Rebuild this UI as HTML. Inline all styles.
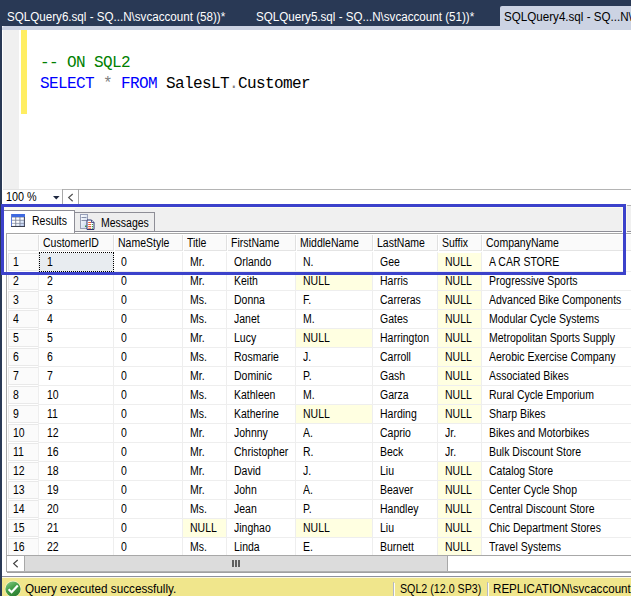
<!DOCTYPE html><html><head><meta charset="utf-8"><title>SQL Query</title><style>
*{margin:0;padding:0;box-sizing:border-box}
html,body{width:631px;height:596px;overflow:hidden;background:#fff}
body{position:relative;font-family:"Liberation Sans",sans-serif;font-size:12px;color:#000}
.a{position:absolute}
.t{position:absolute;white-space:nowrap;transform-origin:0 50%}
#tabbar{left:0;top:0;width:631px;height:26px;background:#293955}
#band{left:2px;top:26px;width:629px;height:4px;background:#ccd3e3;border-top-left-radius:3px}
#lstrip{left:0;top:0;width:2px;height:577px;background:#293955}
.tab{color:#fff;font-size:12px;top:10px;transform:scaleX(.968)}
#atab{left:500px;top:6px;width:131px;height:21px;background:#ccd3e3;border-top-left-radius:2px}
#margin{left:3px;top:30px;width:16px;height:159px;background:#f0f0f0}
#yellow{left:21px;top:30px;width:6px;height:84px;background:#ffee62}
.code{font-family:"Liberation Mono",monospace;font-size:16px;letter-spacing:-0.6px;left:40px;line-height:20px;white-space:pre}
.g{color:#008000}.b{color:#0000ff}.gr{color:#808080}
#zoomline{left:3px;top:189px;width:628px;height:1px;background:#e3e3e3}
#zoomline2{left:62px;top:189px;width:569px;height:1px;background:#b4b4b4}
.cell{position:absolute;height:18px}
.null{background:#ffffe1}
.gt{position:absolute;white-space:nowrap;font-size:12px;line-height:14px;transform-origin:0 50%;transform:scaleX(.874)}
.hl{position:absolute;height:1px;background:#eeeeee}
.vl{position:absolute;width:1px;background:#eeeeee}
.rh{position:absolute;left:8px;width:31px;height:18px;background:#fbfbfb;border:1px solid #e9e9e9}
.hh{position:absolute;top:235px;height:16px;background:#fafafa;border-right:1px solid #e0e0e0;border-bottom:1px solid #e4e4e4}
</style></head><body>
<div class="a" id="tabbar"></div>
<div class="a" id="band"></div>
<div class="a" id="atab"></div>
<div class="t tab" style="left:7px">SQLQuery6.sql - SQ...N\svcaccount (58))*</div>
<div class="t tab" style="left:256px">SQLQuery5.sql - SQ...N\svcaccount (51))*</div>
<div class="t tab" style="left:504px;color:#000">SQLQuery4.sql - SQ...N\s</div>
<div class="a" id="margin"></div><div class="a" id="yellow"></div>
<div class="a code" style="top:53px"><span class="g">-- ON SQL2</span></div>
<div class="a code" style="top:74px"><span class="b">SELECT</span> <span class="gr">*</span> <span class="b">FROM</span> SalesLT<span class="gr">.</span>Customer</div>
<div class="a" id="zoomline"></div><div class="a" id="zoomline2"></div>
<div class="t" style="left:6px;top:190px;font-size:12px;line-height:14px;transform:scaleX(.9)">100 %</div>
<svg class="a" style="left:53px;top:196px" width="8" height="5"><path d="M0 0h6.600L3.300 3.400z" fill="#1e2840"/></svg>
<div class="a" style="left:62px;top:189px;width:1px;height:15px;background:#a8a8a8"></div>
<div class="a" style="left:78px;top:189px;width:1px;height:15px;background:#a8a8a8"></div>
<svg class="a" style="left:67px;top:193px" width="8" height="10"><path d="M5.700 1L1.700 4.600L5.700 8.200" fill="none" stroke="#505050" stroke-width="1.200"/></svg>
<div class="a" style="left:2px;top:205px;width:629px;height:1px;background:#b4b4b4"></div>
<div class="a" style="left:2px;top:206px;width:629px;height:26px;background:#f0f0f0"></div>
<div class="a" style="left:2px;top:232px;width:5px;height:344px;background:#fff"></div>
<div class="a" style="left:74px;top:212px;width:81px;height:20px;background:#eeeeee;border:1px solid #8e8e96"></div>
<div class="a" style="left:2px;top:231px;width:629px;height:1px;background:#8e8e96"></div>
<div class="a" style="left:2px;top:232px;width:629px;height:1px;background:#fff"></div>
<div class="a" style="left:2px;top:207px;width:73px;height:3px;background:#fbfaf0"></div>
<div class="a" style="left:2px;top:210px;width:73px;height:23px;background:#fff;border-top:1px solid #8e8e96;border-right:1px solid #8e8e96"></div>
<div class="gt" style="left:32px;top:214px">Results</div>
<div class="gt" style="left:101px;top:216px">Messages</div>
<svg class="a" style="left:11px;top:214px" width="14" height="13"><rect x="0" y="0" width="14" height="13" fill="#7a8296"/><rect x="0" y="0" width="14" height="3" fill="#3f6ae0"/><rect x="0" y="0" width="1" height="13" fill="#5a7ad8"/><rect x="13" y="3" width="1" height="10" fill="#4a5068"/><rect x="0" y="12" width="14" height="1" fill="#3a3e4c"/><g fill="#fff"><rect x="1" y="3.500" width="3.300" height="2.300"/><rect x="5.200" y="3.500" width="3.300" height="2.300"/><rect x="9.400" y="3.500" width="3.400" height="2.300"/><rect x="1" y="6.600" width="3.300" height="2.300"/><rect x="5.200" y="6.600" width="3.300" height="2.300"/><rect x="9.400" y="6.600" width="3.400" height="2.300" fill="#dce8fc"/><rect x="1" y="9.600" width="3.300" height="2.300"/><rect x="5.200" y="9.600" width="3.300" height="2.300" fill="#e8f0fc"/><rect x="9.400" y="9.600" width="3.400" height="2.300" fill="#c8d8f8"/></g></svg>
<svg class="a" style="left:80px;top:214px" width="15" height="17"><defs><linearGradient id="tw" x1="0" y1="0" x2="1" y2="1"><stop offset="0" stop-color="#ffffff"/><stop offset="1" stop-color="#c4d4ec"/></linearGradient></defs><rect x=".5" y=".5" width="7" height="14" fill="url(#tw)" stroke="#98a0b8"/><path d="M1.500 3.500h5M1.500 6.500h5" stroke="#8890a8" fill="none"/><rect x="5" y="11.500" width="1.500" height="1.500" fill="#3aa040"/><path d="M7 6h4.500L14 8.500V15.500H7z" fill="#fff" stroke="#2c3470"/><path d="M11.500 6V8.500H14" fill="#c8d0e8" stroke="#2c3470" stroke-width=".8"/><path d="M8.200 8.500h2.800M8.200 10.500h2.800M8.200 12.500h2.800M8.200 14.300h2.800" stroke="#f05a30" stroke-width="1.100" fill="none"/><path d="M11.800 10.500h1.200M11.800 12.500h1.200M11.800 14.300h1.200" stroke="#3a9a40" stroke-width="1.100" fill="none"/></svg>
<div class="a" style="left:6px;top:233px;width:625px;height:1px;background:#a8a8a8"></div>
<div class="a" style="left:6px;top:233px;width:1px;height:339px;background:#a8a8a8"></div>
<div class="a" style="left:7px;top:234px;width:624px;height:1px;background:#fff"></div>
<div class="hh" style="left:8px;width:31px"></div>
<div class="hh" style="left:40px;width:74px"></div>
<div class="hh" style="left:115px;width:68px"></div>
<div class="hh" style="left:184px;width:43px"></div>
<div class="hh" style="left:228px;width:68px"></div>
<div class="hh" style="left:297px;width:76px"></div>
<div class="hh" style="left:374px;width:64px"></div>
<div class="hh" style="left:439px;width:43px"></div>
<div class="hh" style="left:483px;width:158px"></div>
<div class="gt" style="left:43px;top:236px">CustomerID</div>
<div class="gt" style="left:118px;top:236px">NameStyle</div>
<div class="gt" style="left:187px;top:236px">Title</div>
<div class="gt" style="left:231px;top:236px">FirstName</div>
<div class="gt" style="left:300px;top:236px">MiddleName</div>
<div class="gt" style="left:377px;top:236px">LastName</div>
<div class="gt" style="left:442px;top:236px">Suffix</div>
<div class="gt" style="left:486px;top:236px">CompanyName</div>
<div class="cell" style="left:39px;top:253px;width:74px;background:#e8ecf0"><span class="gt" style="left:7.5px;top:2px">1</span></div>
<div class="cell" style="left:114px;top:253px;width:68px"><span class="gt" style="left:7px;top:2px">0</span></div>
<div class="cell" style="left:183px;top:253px;width:43px"><span class="gt" style="left:7px;top:2px">Mr.</span></div>
<div class="cell" style="left:227px;top:253px;width:68px"><span class="gt" style="left:7px;top:2px">Orlando</span></div>
<div class="cell" style="left:296px;top:253px;width:76px"><span class="gt" style="left:7px;top:2px">N.</span></div>
<div class="cell" style="left:373px;top:253px;width:64px"><span class="gt" style="left:7px;top:2px">Gee</span></div>
<div class="cell null" style="left:438px;top:253px;width:43px"><span class="gt" style="left:7px;top:2px">NULL</span></div>
<div class="cell" style="left:482px;top:253px;width:158px"><span class="gt" style="left:7px;top:2px">A CAR STORE</span></div>
<div class="rh" style="top:253px"><span class="gt" style="left:4px;top:1px">1</span></div>
<div class="hl" style="left:39px;top:271px;width:592px"></div>
<div class="cell" style="left:39px;top:272px;width:74px"><span class="gt" style="left:7.5px;top:2px">2</span></div>
<div class="cell" style="left:114px;top:272px;width:68px"><span class="gt" style="left:7px;top:2px">0</span></div>
<div class="cell" style="left:183px;top:272px;width:43px"><span class="gt" style="left:7px;top:2px">Mr.</span></div>
<div class="cell" style="left:227px;top:272px;width:68px"><span class="gt" style="left:7px;top:2px">Keith</span></div>
<div class="cell null" style="left:296px;top:272px;width:76px"><span class="gt" style="left:7px;top:2px">NULL</span></div>
<div class="cell" style="left:373px;top:272px;width:64px"><span class="gt" style="left:7px;top:2px">Harris</span></div>
<div class="cell null" style="left:438px;top:272px;width:43px"><span class="gt" style="left:7px;top:2px">NULL</span></div>
<div class="cell" style="left:482px;top:272px;width:158px"><span class="gt" style="left:7px;top:2px">Progressive Sports</span></div>
<div class="rh" style="top:272px"><span class="gt" style="left:4px;top:1px">2</span></div>
<div class="hl" style="left:39px;top:290px;width:592px"></div>
<div class="cell" style="left:39px;top:291px;width:74px"><span class="gt" style="left:7.5px;top:2px">3</span></div>
<div class="cell" style="left:114px;top:291px;width:68px"><span class="gt" style="left:7px;top:2px">0</span></div>
<div class="cell" style="left:183px;top:291px;width:43px"><span class="gt" style="left:7px;top:2px">Ms.</span></div>
<div class="cell" style="left:227px;top:291px;width:68px"><span class="gt" style="left:7px;top:2px">Donna</span></div>
<div class="cell" style="left:296px;top:291px;width:76px"><span class="gt" style="left:7px;top:2px">F.</span></div>
<div class="cell" style="left:373px;top:291px;width:64px"><span class="gt" style="left:7px;top:2px">Carreras</span></div>
<div class="cell null" style="left:438px;top:291px;width:43px"><span class="gt" style="left:7px;top:2px">NULL</span></div>
<div class="cell" style="left:482px;top:291px;width:158px"><span class="gt" style="left:7px;top:2px">Advanced Bike Components</span></div>
<div class="rh" style="top:291px"><span class="gt" style="left:4px;top:1px">3</span></div>
<div class="hl" style="left:39px;top:309px;width:592px"></div>
<div class="cell" style="left:39px;top:310px;width:74px"><span class="gt" style="left:7.5px;top:2px">4</span></div>
<div class="cell" style="left:114px;top:310px;width:68px"><span class="gt" style="left:7px;top:2px">0</span></div>
<div class="cell" style="left:183px;top:310px;width:43px"><span class="gt" style="left:7px;top:2px">Ms.</span></div>
<div class="cell" style="left:227px;top:310px;width:68px"><span class="gt" style="left:7px;top:2px">Janet</span></div>
<div class="cell" style="left:296px;top:310px;width:76px"><span class="gt" style="left:7px;top:2px">M.</span></div>
<div class="cell" style="left:373px;top:310px;width:64px"><span class="gt" style="left:7px;top:2px">Gates</span></div>
<div class="cell null" style="left:438px;top:310px;width:43px"><span class="gt" style="left:7px;top:2px">NULL</span></div>
<div class="cell" style="left:482px;top:310px;width:158px"><span class="gt" style="left:7px;top:2px">Modular Cycle Systems</span></div>
<div class="rh" style="top:310px"><span class="gt" style="left:4px;top:1px">4</span></div>
<div class="hl" style="left:39px;top:328px;width:592px"></div>
<div class="cell" style="left:39px;top:329px;width:74px"><span class="gt" style="left:7.5px;top:2px">5</span></div>
<div class="cell" style="left:114px;top:329px;width:68px"><span class="gt" style="left:7px;top:2px">0</span></div>
<div class="cell" style="left:183px;top:329px;width:43px"><span class="gt" style="left:7px;top:2px">Mr.</span></div>
<div class="cell" style="left:227px;top:329px;width:68px"><span class="gt" style="left:7px;top:2px">Lucy</span></div>
<div class="cell null" style="left:296px;top:329px;width:76px"><span class="gt" style="left:7px;top:2px">NULL</span></div>
<div class="cell" style="left:373px;top:329px;width:64px"><span class="gt" style="left:7px;top:2px">Harrington</span></div>
<div class="cell null" style="left:438px;top:329px;width:43px"><span class="gt" style="left:7px;top:2px">NULL</span></div>
<div class="cell" style="left:482px;top:329px;width:158px"><span class="gt" style="left:7px;top:2px">Metropolitan Sports Supply</span></div>
<div class="rh" style="top:329px"><span class="gt" style="left:4px;top:1px">5</span></div>
<div class="hl" style="left:39px;top:347px;width:592px"></div>
<div class="cell" style="left:39px;top:348px;width:74px"><span class="gt" style="left:7.5px;top:2px">6</span></div>
<div class="cell" style="left:114px;top:348px;width:68px"><span class="gt" style="left:7px;top:2px">0</span></div>
<div class="cell" style="left:183px;top:348px;width:43px"><span class="gt" style="left:7px;top:2px">Ms.</span></div>
<div class="cell" style="left:227px;top:348px;width:68px"><span class="gt" style="left:7px;top:2px">Rosmarie</span></div>
<div class="cell" style="left:296px;top:348px;width:76px"><span class="gt" style="left:7px;top:2px">J.</span></div>
<div class="cell" style="left:373px;top:348px;width:64px"><span class="gt" style="left:7px;top:2px">Carroll</span></div>
<div class="cell null" style="left:438px;top:348px;width:43px"><span class="gt" style="left:7px;top:2px">NULL</span></div>
<div class="cell" style="left:482px;top:348px;width:158px"><span class="gt" style="left:7px;top:2px">Aerobic Exercise Company</span></div>
<div class="rh" style="top:348px"><span class="gt" style="left:4px;top:1px">6</span></div>
<div class="hl" style="left:39px;top:366px;width:592px"></div>
<div class="cell" style="left:39px;top:367px;width:74px"><span class="gt" style="left:7.5px;top:2px">7</span></div>
<div class="cell" style="left:114px;top:367px;width:68px"><span class="gt" style="left:7px;top:2px">0</span></div>
<div class="cell" style="left:183px;top:367px;width:43px"><span class="gt" style="left:7px;top:2px">Mr.</span></div>
<div class="cell" style="left:227px;top:367px;width:68px"><span class="gt" style="left:7px;top:2px">Dominic</span></div>
<div class="cell" style="left:296px;top:367px;width:76px"><span class="gt" style="left:7px;top:2px">P.</span></div>
<div class="cell" style="left:373px;top:367px;width:64px"><span class="gt" style="left:7px;top:2px">Gash</span></div>
<div class="cell null" style="left:438px;top:367px;width:43px"><span class="gt" style="left:7px;top:2px">NULL</span></div>
<div class="cell" style="left:482px;top:367px;width:158px"><span class="gt" style="left:7px;top:2px">Associated Bikes</span></div>
<div class="rh" style="top:367px"><span class="gt" style="left:4px;top:1px">7</span></div>
<div class="hl" style="left:39px;top:385px;width:592px"></div>
<div class="cell" style="left:39px;top:386px;width:74px"><span class="gt" style="left:7.5px;top:2px">10</span></div>
<div class="cell" style="left:114px;top:386px;width:68px"><span class="gt" style="left:7px;top:2px">0</span></div>
<div class="cell" style="left:183px;top:386px;width:43px"><span class="gt" style="left:7px;top:2px">Ms.</span></div>
<div class="cell" style="left:227px;top:386px;width:68px"><span class="gt" style="left:7px;top:2px">Kathleen</span></div>
<div class="cell" style="left:296px;top:386px;width:76px"><span class="gt" style="left:7px;top:2px">M.</span></div>
<div class="cell" style="left:373px;top:386px;width:64px"><span class="gt" style="left:7px;top:2px">Garza</span></div>
<div class="cell null" style="left:438px;top:386px;width:43px"><span class="gt" style="left:7px;top:2px">NULL</span></div>
<div class="cell" style="left:482px;top:386px;width:158px"><span class="gt" style="left:7px;top:2px">Rural Cycle Emporium</span></div>
<div class="rh" style="top:386px"><span class="gt" style="left:4px;top:1px">8</span></div>
<div class="hl" style="left:39px;top:404px;width:592px"></div>
<div class="cell" style="left:39px;top:405px;width:74px"><span class="gt" style="left:7.5px;top:2px">11</span></div>
<div class="cell" style="left:114px;top:405px;width:68px"><span class="gt" style="left:7px;top:2px">0</span></div>
<div class="cell" style="left:183px;top:405px;width:43px"><span class="gt" style="left:7px;top:2px">Ms.</span></div>
<div class="cell" style="left:227px;top:405px;width:68px"><span class="gt" style="left:7px;top:2px">Katherine</span></div>
<div class="cell null" style="left:296px;top:405px;width:76px"><span class="gt" style="left:7px;top:2px">NULL</span></div>
<div class="cell" style="left:373px;top:405px;width:64px"><span class="gt" style="left:7px;top:2px">Harding</span></div>
<div class="cell null" style="left:438px;top:405px;width:43px"><span class="gt" style="left:7px;top:2px">NULL</span></div>
<div class="cell" style="left:482px;top:405px;width:158px"><span class="gt" style="left:7px;top:2px">Sharp Bikes</span></div>
<div class="rh" style="top:405px"><span class="gt" style="left:4px;top:1px">9</span></div>
<div class="hl" style="left:39px;top:423px;width:592px"></div>
<div class="cell" style="left:39px;top:424px;width:74px"><span class="gt" style="left:7.5px;top:2px">12</span></div>
<div class="cell" style="left:114px;top:424px;width:68px"><span class="gt" style="left:7px;top:2px">0</span></div>
<div class="cell" style="left:183px;top:424px;width:43px"><span class="gt" style="left:7px;top:2px">Mr.</span></div>
<div class="cell" style="left:227px;top:424px;width:68px"><span class="gt" style="left:7px;top:2px">Johnny</span></div>
<div class="cell" style="left:296px;top:424px;width:76px"><span class="gt" style="left:7px;top:2px">A.</span></div>
<div class="cell" style="left:373px;top:424px;width:64px"><span class="gt" style="left:7px;top:2px">Caprio</span></div>
<div class="cell" style="left:438px;top:424px;width:43px"><span class="gt" style="left:7px;top:2px">Jr.</span></div>
<div class="cell" style="left:482px;top:424px;width:158px"><span class="gt" style="left:7px;top:2px">Bikes and Motorbikes</span></div>
<div class="rh" style="top:424px"><span class="gt" style="left:4px;top:1px">10</span></div>
<div class="hl" style="left:39px;top:442px;width:592px"></div>
<div class="cell" style="left:39px;top:443px;width:74px"><span class="gt" style="left:7.5px;top:2px">16</span></div>
<div class="cell" style="left:114px;top:443px;width:68px"><span class="gt" style="left:7px;top:2px">0</span></div>
<div class="cell" style="left:183px;top:443px;width:43px"><span class="gt" style="left:7px;top:2px">Mr.</span></div>
<div class="cell" style="left:227px;top:443px;width:68px"><span class="gt" style="left:7px;top:2px">Christopher</span></div>
<div class="cell" style="left:296px;top:443px;width:76px"><span class="gt" style="left:7px;top:2px">R.</span></div>
<div class="cell" style="left:373px;top:443px;width:64px"><span class="gt" style="left:7px;top:2px">Beck</span></div>
<div class="cell" style="left:438px;top:443px;width:43px"><span class="gt" style="left:7px;top:2px">Jr.</span></div>
<div class="cell" style="left:482px;top:443px;width:158px"><span class="gt" style="left:7px;top:2px">Bulk Discount Store</span></div>
<div class="rh" style="top:443px"><span class="gt" style="left:4px;top:1px">11</span></div>
<div class="hl" style="left:39px;top:461px;width:592px"></div>
<div class="cell" style="left:39px;top:462px;width:74px"><span class="gt" style="left:7.5px;top:2px">18</span></div>
<div class="cell" style="left:114px;top:462px;width:68px"><span class="gt" style="left:7px;top:2px">0</span></div>
<div class="cell" style="left:183px;top:462px;width:43px"><span class="gt" style="left:7px;top:2px">Mr.</span></div>
<div class="cell" style="left:227px;top:462px;width:68px"><span class="gt" style="left:7px;top:2px">David</span></div>
<div class="cell" style="left:296px;top:462px;width:76px"><span class="gt" style="left:7px;top:2px">J.</span></div>
<div class="cell" style="left:373px;top:462px;width:64px"><span class="gt" style="left:7px;top:2px">Liu</span></div>
<div class="cell null" style="left:438px;top:462px;width:43px"><span class="gt" style="left:7px;top:2px">NULL</span></div>
<div class="cell" style="left:482px;top:462px;width:158px"><span class="gt" style="left:7px;top:2px">Catalog Store</span></div>
<div class="rh" style="top:462px"><span class="gt" style="left:4px;top:1px">12</span></div>
<div class="hl" style="left:39px;top:480px;width:592px"></div>
<div class="cell" style="left:39px;top:481px;width:74px"><span class="gt" style="left:7.5px;top:2px">19</span></div>
<div class="cell" style="left:114px;top:481px;width:68px"><span class="gt" style="left:7px;top:2px">0</span></div>
<div class="cell" style="left:183px;top:481px;width:43px"><span class="gt" style="left:7px;top:2px">Mr.</span></div>
<div class="cell" style="left:227px;top:481px;width:68px"><span class="gt" style="left:7px;top:2px">John</span></div>
<div class="cell" style="left:296px;top:481px;width:76px"><span class="gt" style="left:7px;top:2px">A.</span></div>
<div class="cell" style="left:373px;top:481px;width:64px"><span class="gt" style="left:7px;top:2px">Beaver</span></div>
<div class="cell null" style="left:438px;top:481px;width:43px"><span class="gt" style="left:7px;top:2px">NULL</span></div>
<div class="cell" style="left:482px;top:481px;width:158px"><span class="gt" style="left:7px;top:2px">Center Cycle Shop</span></div>
<div class="rh" style="top:481px"><span class="gt" style="left:4px;top:1px">13</span></div>
<div class="hl" style="left:39px;top:499px;width:592px"></div>
<div class="cell" style="left:39px;top:500px;width:74px"><span class="gt" style="left:7.5px;top:2px">20</span></div>
<div class="cell" style="left:114px;top:500px;width:68px"><span class="gt" style="left:7px;top:2px">0</span></div>
<div class="cell" style="left:183px;top:500px;width:43px"><span class="gt" style="left:7px;top:2px">Ms.</span></div>
<div class="cell" style="left:227px;top:500px;width:68px"><span class="gt" style="left:7px;top:2px">Jean</span></div>
<div class="cell" style="left:296px;top:500px;width:76px"><span class="gt" style="left:7px;top:2px">P.</span></div>
<div class="cell" style="left:373px;top:500px;width:64px"><span class="gt" style="left:7px;top:2px">Handley</span></div>
<div class="cell null" style="left:438px;top:500px;width:43px"><span class="gt" style="left:7px;top:2px">NULL</span></div>
<div class="cell" style="left:482px;top:500px;width:158px"><span class="gt" style="left:7px;top:2px">Central Discount Store</span></div>
<div class="rh" style="top:500px"><span class="gt" style="left:4px;top:1px">14</span></div>
<div class="hl" style="left:39px;top:518px;width:592px"></div>
<div class="cell" style="left:39px;top:519px;width:74px"><span class="gt" style="left:7.5px;top:2px">21</span></div>
<div class="cell" style="left:114px;top:519px;width:68px"><span class="gt" style="left:7px;top:2px">0</span></div>
<div class="cell null" style="left:183px;top:519px;width:43px"><span class="gt" style="left:7px;top:2px">NULL</span></div>
<div class="cell" style="left:227px;top:519px;width:68px"><span class="gt" style="left:7px;top:2px">Jinghao</span></div>
<div class="cell null" style="left:296px;top:519px;width:76px"><span class="gt" style="left:7px;top:2px">NULL</span></div>
<div class="cell" style="left:373px;top:519px;width:64px"><span class="gt" style="left:7px;top:2px">Liu</span></div>
<div class="cell null" style="left:438px;top:519px;width:43px"><span class="gt" style="left:7px;top:2px">NULL</span></div>
<div class="cell" style="left:482px;top:519px;width:158px"><span class="gt" style="left:7px;top:2px">Chic Department Stores</span></div>
<div class="rh" style="top:519px"><span class="gt" style="left:4px;top:1px">15</span></div>
<div class="hl" style="left:39px;top:537px;width:592px"></div>
<div class="cell" style="left:39px;top:538px;width:74px"><span class="gt" style="left:7.5px;top:2px">22</span></div>
<div class="cell" style="left:114px;top:538px;width:68px"><span class="gt" style="left:7px;top:2px">0</span></div>
<div class="cell" style="left:183px;top:538px;width:43px"><span class="gt" style="left:7px;top:2px">Ms.</span></div>
<div class="cell" style="left:227px;top:538px;width:68px"><span class="gt" style="left:7px;top:2px">Linda</span></div>
<div class="cell" style="left:296px;top:538px;width:76px"><span class="gt" style="left:7px;top:2px">E.</span></div>
<div class="cell" style="left:373px;top:538px;width:64px"><span class="gt" style="left:7px;top:2px">Burnett</span></div>
<div class="cell null" style="left:438px;top:538px;width:43px"><span class="gt" style="left:7px;top:2px">NULL</span></div>
<div class="cell" style="left:482px;top:538px;width:158px"><span class="gt" style="left:7px;top:2px">Travel Systems</span></div>
<div class="rh" style="top:538px"><span class="gt" style="left:4px;top:1px">16</span></div>
<div class="hl" style="left:39px;top:556px;width:592px"></div>
<div class="vl" style="left:38px;top:252px;height:304px"></div>
<div class="vl" style="left:113px;top:252px;height:304px"></div>
<div class="vl" style="left:182px;top:252px;height:304px"></div>
<div class="vl" style="left:226px;top:252px;height:304px"></div>
<div class="vl" style="left:295px;top:252px;height:304px"></div>
<div class="vl" style="left:372px;top:252px;height:304px"></div>
<div class="vl" style="left:437px;top:252px;height:304px"></div>
<div class="vl" style="left:481px;top:252px;height:304px"></div>
<div class="a" style="left:39px;top:252px;width:75px;height:20px;border:1px dotted #000"></div>
<div class="a" style="left:7px;top:555px;width:624px;height:18px;background:#fff;border-top:1px solid #a8a8a8;border-bottom:1px solid #a0a0a0"></div>
<div class="a" style="left:24px;top:555px;width:424px;height:17px;background:#dcdcdc;border:1px solid #a8a8a8"></div>
<div class="a" style="left:7px;top:571px;width:624px;height:1px;background:#b0b0b0"></div>
<svg class="a" style="left:12px;top:559px" width="8" height="10"><path d="M5.700 1L1.700 4.600L5.700 8.200" fill="none" stroke="#404040" stroke-width="1.200"/></svg>
<div class="a" style="left:232px;top:560px;width:2px;height:7px;background:#606060"></div><div class="a" style="left:235px;top:560px;width:2px;height:7px;background:#606060"></div><div class="a" style="left:238px;top:560px;width:2px;height:7px;background:#606060"></div>
<div class="a" style="left:2px;top:576px;width:629px;height:1px;background:#8e909e"></div>
<div class="a" style="left:2px;top:577px;width:629px;height:1px;background:#fbf9e8"></div>
<div class="a" style="left:2px;top:578px;width:629px;height:18px;background:#f0e68c"></div>
<div class="a" style="left:0;top:577px;width:2px;height:19px;background:#293955"></div>
<svg class="a" style="left:4px;top:580px" width="18" height="16"><defs><linearGradient id="gc" x1="0" y1="0" x2="0.600" y2="1"><stop offset="0" stop-color="#8ed08e"/><stop offset="0.500" stop-color="#45a048"/><stop offset="1" stop-color="#2d8033"/></linearGradient></defs><circle cx="9" cy="9" r="8.200" fill="#f6f2c8"/><circle cx="9" cy="9" r="7.600" fill="url(#gc)"/><path d="M4.600 9.300L7.600 12.200L13.800 5.600" fill="none" stroke="#fff" stroke-width="2.200"/></svg>
<div class="t" style="left:25px;top:582px;line-height:14px;transform:scaleX(.975)">Query executed successfully.</div>
<div class="t" style="left:400px;top:582px;line-height:14px;transform:scaleX(.89)">SQL2 (12.0 SP3)</div>
<div class="a" style="left:393px;top:582px;width:1px;height:14px;background:#b4b8c4"></div><div class="a" style="left:394px;top:583px;width:1px;height:13px;background:#fffef4"></div>
<div class="a" style="left:487px;top:582px;width:1px;height:14px;background:#b4b8c4"></div><div class="a" style="left:488px;top:583px;width:1px;height:13px;background:#fffef4"></div>
<div class="t" style="left:493px;top:582px;line-height:14px;transform:scaleX(.967)">REPLICATION\svcaccount</div>
<div class="a" id="lstrip"></div>
<div class="a" style="left:75px;top:207px;width:548px;height:1px;background:#fbfaf0"></div>
<div class="a" style="left:622px;top:207px;width:1px;height:25px;background:#fbfaf0"></div>
<div class="a" style="left:626px;top:204px;width:1px;height:28px;background:#fbfaf0"></div>
<div class="a" style="left:1px;top:204px;width:625px;height:71px;border:3px solid #3c42cb"></div>
</body></html>
